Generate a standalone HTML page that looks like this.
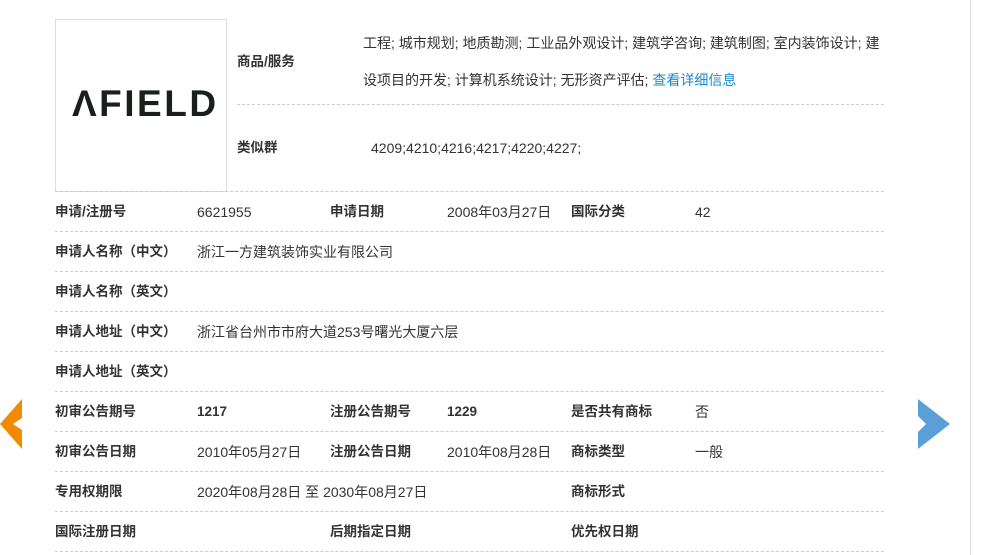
<!DOCTYPE html>
<html><head><meta charset="utf-8"><style>
body{margin:0;width:1001px;height:555px;background:#fff;position:relative;overflow:hidden;font-family:"Liberation Sans","Noto Sans CJK SC",sans-serif;font-size:14px;color:#333}
.a{position:absolute;white-space:nowrap;line-height:16px}
.b{font-weight:bold;font-size:13.5px}
.h{position:absolute;left:55px;width:829px;border-top:1px dashed #ccc;height:0}
</style></head><body>
<div style="position:absolute;left:970px;top:0;width:1px;height:555px;background:#ddd"></div>
<div style="position:absolute;left:55px;top:19px;width:170px;height:171px;border:1px solid #ddd"></div>
<div class="a" style="left:72px;top:82px;font-size:37px;line-height:44px;font-weight:bold;color:#1a1f1c;letter-spacing:2.5px">ΛFIELD</div>
<div class="a b" style="left:237px;top:54px">商品/服务</div>
<div class="a" style="left:363px;top:35px">工程; 城市规划; 地质勘测; 工业品外观设计; 建筑学咨询; 建筑制图; 室内装饰设计; 建</div>
<div class="a" style="left:363px;top:72px">设项目的开发; 计算机系统设计; 无形资产评估; <span style="color:#1a8ad0">查看详细信息</span></div>
<div style="position:absolute;left:237px;top:104px;width:647px;border-top:1px dashed #ccc"></div>
<div class="a b" style="left:237px;top:140px">类似群</div>
<div class="a" style="left:371px;top:140px">4209;4210;4216;4217;4220;4227;</div>
<div class="h" style="top:191px"></div>
<div class="h" style="top:231px"></div>
<div class="h" style="top:271px"></div>
<div class="h" style="top:311px"></div>
<div class="h" style="top:351px"></div>
<div class="h" style="top:391px"></div>
<div class="h" style="top:431px"></div>
<div class="h" style="top:471px"></div>
<div class="h" style="top:511px"></div>
<div class="h" style="top:551px"></div>

<div class="a b" style="left:55px;top:204px">申请/注册号</div><div class="a" style="left:197px;top:204px">6621955</div>
<div class="a b" style="left:330px;top:204px">申请日期</div><div class="a" style="left:447px;top:204px">2008年03月27日</div>
<div class="a b" style="left:571px;top:204px">国际分类</div><div class="a" style="left:695px;top:204px">42</div>

<div class="a b" style="left:55px;top:244px">申请人名称（中文）</div><div class="a" style="left:197px;top:244px">浙江一方建筑装饰实业有限公司</div>
<div class="a b" style="left:55px;top:284px">申请人名称（英文）</div>
<div class="a b" style="left:55px;top:324px">申请人地址（中文）</div><div class="a" style="left:197px;top:324px">浙江省台州市市府大道253号曙光大厦六层</div>
<div class="a b" style="left:55px;top:364px">申请人地址（英文）</div>

<div class="a b" style="left:55px;top:404px">初审公告期号</div><div class="a b" style="left:197px;top:404px">1217</div>
<div class="a b" style="left:330px;top:404px">注册公告期号</div><div class="a b" style="left:447px;top:404px">1229</div>
<div class="a b" style="left:571px;top:404px">是否共有商标</div><div class="a" style="left:695px;top:404px">否</div>

<div class="a b" style="left:55px;top:444px">初审公告日期</div><div class="a" style="left:197px;top:444px">2010年05月27日</div>
<div class="a b" style="left:330px;top:444px">注册公告日期</div><div class="a" style="left:447px;top:444px">2010年08月28日</div>
<div class="a b" style="left:571px;top:444px">商标类型</div><div class="a" style="left:695px;top:444px">一般</div>

<div class="a b" style="left:55px;top:484px">专用权期限</div><div class="a" style="left:197px;top:484px">2020年08月28日 至 2030年08月27日</div>
<div class="a b" style="left:571px;top:484px">商标形式</div>

<div class="a b" style="left:55px;top:524px">国际注册日期</div>
<div class="a b" style="left:330px;top:524px">后期指定日期</div>
<div class="a b" style="left:571px;top:524px">优先权日期</div>

<svg style="position:absolute;left:0;top:398px" width="24" height="52"><polygon points="22,1 22,20 13,26 22,32 22,51 0,26" fill="#f28a00"/></svg>
<svg style="position:absolute;left:917px;top:398px" width="34" height="52"><polygon points="1,1 33,26 1,51 1,34 9,26 1,18" fill="#5b9fd9"/></svg>
</body></html>
